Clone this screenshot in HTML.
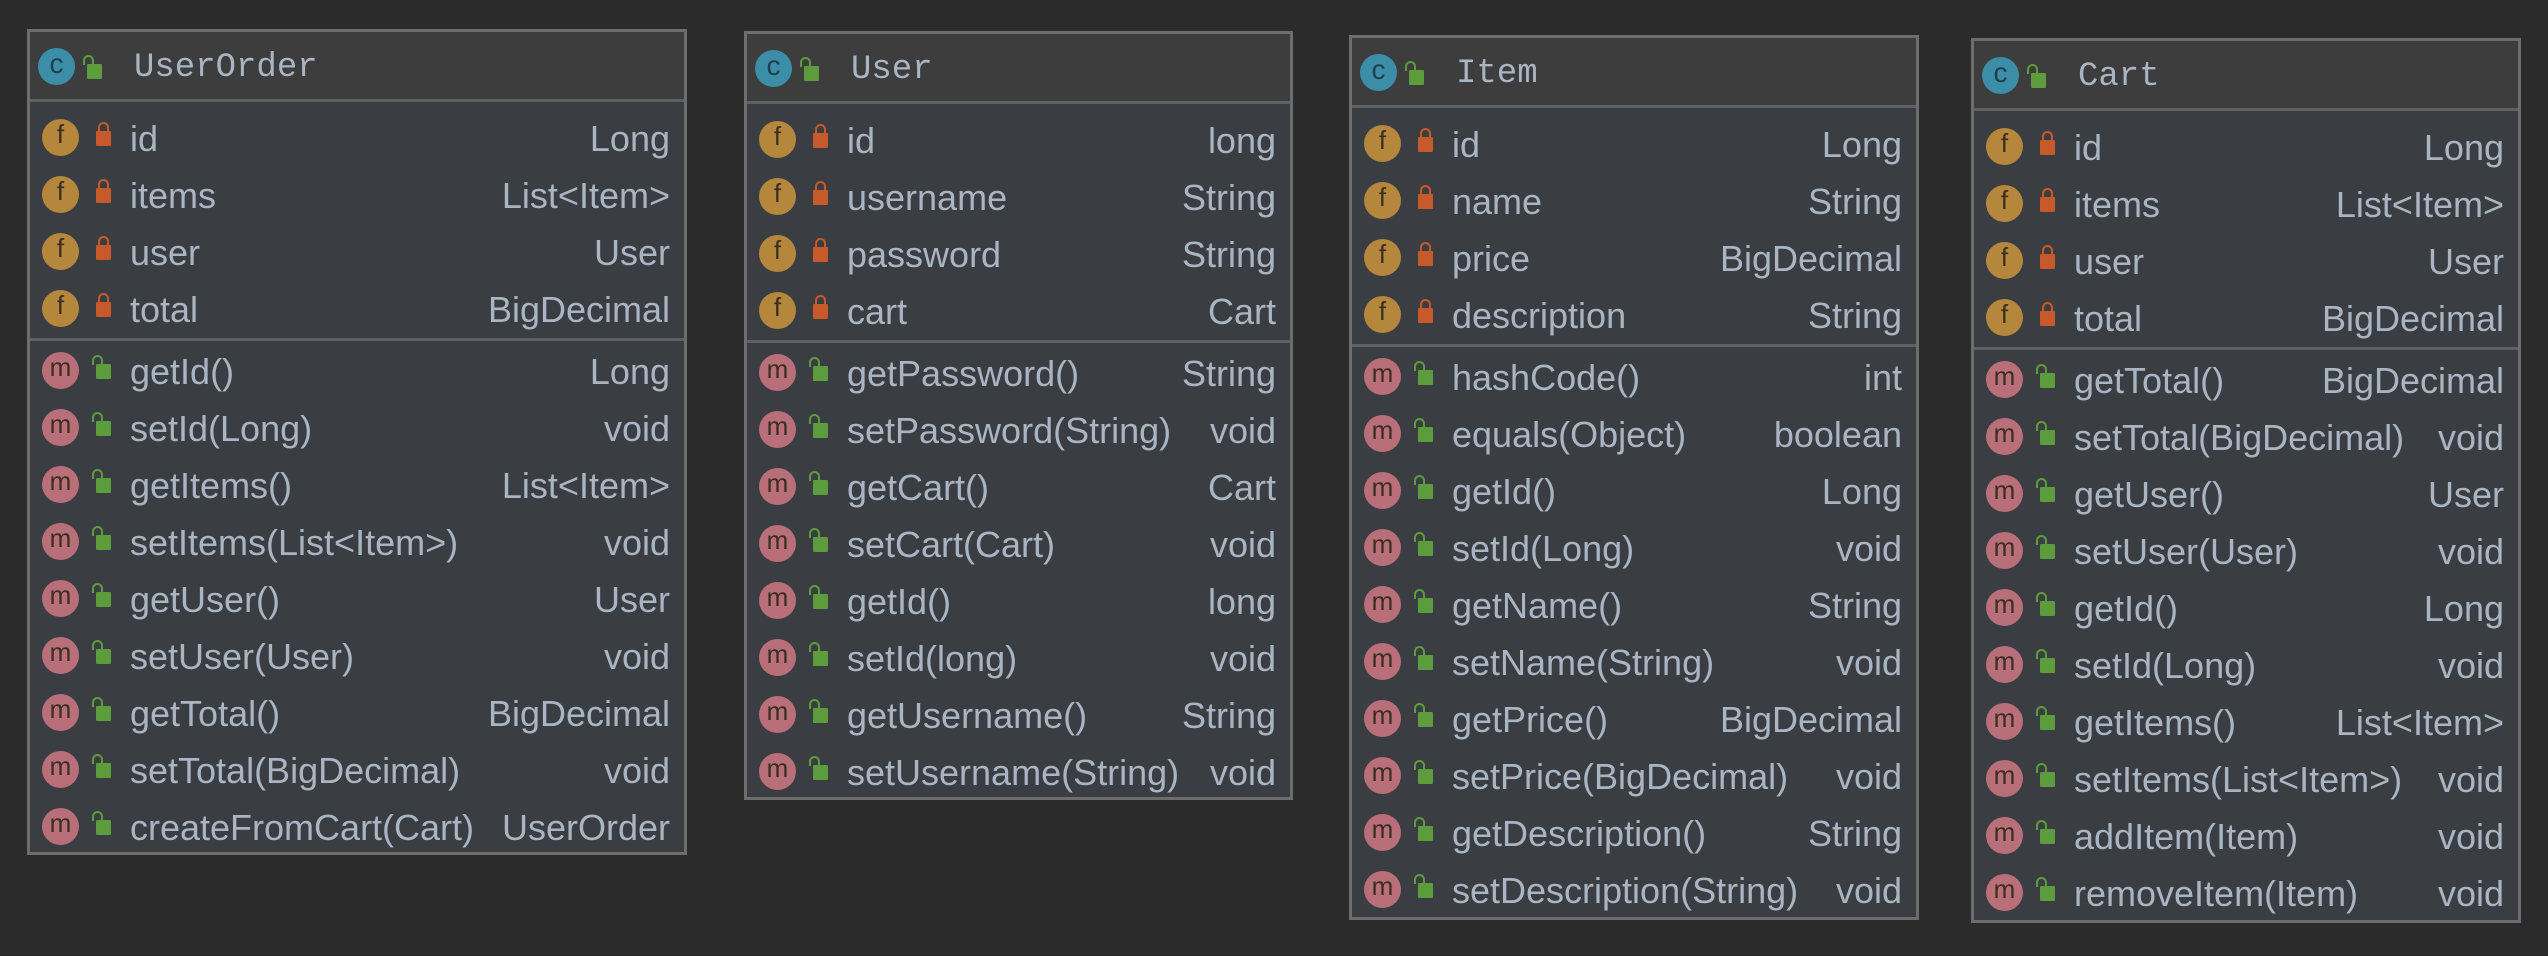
<!DOCTYPE html>
<html><head><meta charset="utf-8"><style>
html,body{margin:0;padding:0;background:#2b2b2b;width:2548px;height:956px;overflow:hidden}
.box{position:absolute;background:#3a3d41;border:3px solid #6d6d6d;box-sizing:border-box}
.hd{height:70px;background:#3d3d3d;border-bottom:3px solid #5e6164;position:relative;box-sizing:border-box}
.hd .t{position:absolute;left:104px;top:17px;font:34px "Liberation Mono",monospace;color:#aab5c4}
.sec{padding:0 0 3px}
.sec.f{border-bottom:3px solid #5e6164;padding-top:6px;padding-bottom:2px}
.r{height:57px;position:relative;font:36px "Liberation Sans",sans-serif;color:#aab5c4}
.r .n{position:absolute;left:100px;top:10px;white-space:nowrap}
.r .ty{position:absolute;right:14px;top:10px;white-space:nowrap}
.ic{position:absolute;width:37px;height:37px;border-radius:50%;top:11px;left:12px;text-align:center;line-height:35px;font:26px "Liberation Sans",sans-serif;color:#3a2e20}
.icf{background:#b5873d}
.icm{background:#b96f7a}
.icc{background:#3b8da8;left:8px;top:16px;color:#1f3f4c;font-size:28px}
.lk{position:absolute;left:66px;top:23px;width:15px;height:15px;background:#c65a2a;border-radius:1px}
.lk:before{content:"";position:absolute;left:2px;top:-9px;width:7px;height:8px;border:2px solid #c65a2a;border-bottom:none;border-radius:6px 6px 0 0}
.lk.g{background:#5c9c3d}
.lk.g:before{border-color:#5c9c3d;left:-4px;}
.hd .lk{left:57px;top:32px}
</style></head><body>

<div class="box" style="left:27px;top:29px;width:660px;height:826px">
<div class="hd"><div class="ic icc">c</div><div class="lk g"></div><div class="t">UserOrder</div></div>
<div class="sec f">
<div class="r"><div class="ic icf">f</div><div class="lk"></div><span class="n">id</span><span class="ty">Long</span></div>
<div class="r"><div class="ic icf">f</div><div class="lk"></div><span class="n">items</span><span class="ty">List&lt;Item&gt;</span></div>
<div class="r"><div class="ic icf">f</div><div class="lk"></div><span class="n">user</span><span class="ty">User</span></div>
<div class="r"><div class="ic icf">f</div><div class="lk"></div><span class="n">total</span><span class="ty">BigDecimal</span></div>
</div><div class="sec">
<div class="r"><div class="ic icm">m</div><div class="lk g"></div><span class="n">getId()</span><span class="ty">Long</span></div>
<div class="r"><div class="ic icm">m</div><div class="lk g"></div><span class="n">setId(Long)</span><span class="ty">void</span></div>
<div class="r"><div class="ic icm">m</div><div class="lk g"></div><span class="n">getItems()</span><span class="ty">List&lt;Item&gt;</span></div>
<div class="r"><div class="ic icm">m</div><div class="lk g"></div><span class="n">setItems(List&lt;Item&gt;)</span><span class="ty">void</span></div>
<div class="r"><div class="ic icm">m</div><div class="lk g"></div><span class="n">getUser()</span><span class="ty">User</span></div>
<div class="r"><div class="ic icm">m</div><div class="lk g"></div><span class="n">setUser(User)</span><span class="ty">void</span></div>
<div class="r"><div class="ic icm">m</div><div class="lk g"></div><span class="n">getTotal()</span><span class="ty">BigDecimal</span></div>
<div class="r"><div class="ic icm">m</div><div class="lk g"></div><span class="n">setTotal(BigDecimal)</span><span class="ty">void</span></div>
<div class="r"><div class="ic icm">m</div><div class="lk g"></div><span class="n">createFromCart(Cart)</span><span class="ty">UserOrder</span></div>
</div></div>

<div class="box" style="left:744px;top:31px;width:549px;height:769px">
<div class="hd"><div class="ic icc">c</div><div class="lk g"></div><div class="t">User</div></div>
<div class="sec f">
<div class="r"><div class="ic icf">f</div><div class="lk"></div><span class="n">id</span><span class="ty">long</span></div>
<div class="r"><div class="ic icf">f</div><div class="lk"></div><span class="n">username</span><span class="ty">String</span></div>
<div class="r"><div class="ic icf">f</div><div class="lk"></div><span class="n">password</span><span class="ty">String</span></div>
<div class="r"><div class="ic icf">f</div><div class="lk"></div><span class="n">cart</span><span class="ty">Cart</span></div>
</div><div class="sec">
<div class="r"><div class="ic icm">m</div><div class="lk g"></div><span class="n">getPassword()</span><span class="ty">String</span></div>
<div class="r"><div class="ic icm">m</div><div class="lk g"></div><span class="n">setPassword(String)</span><span class="ty">void</span></div>
<div class="r"><div class="ic icm">m</div><div class="lk g"></div><span class="n">getCart()</span><span class="ty">Cart</span></div>
<div class="r"><div class="ic icm">m</div><div class="lk g"></div><span class="n">setCart(Cart)</span><span class="ty">void</span></div>
<div class="r"><div class="ic icm">m</div><div class="lk g"></div><span class="n">getId()</span><span class="ty">long</span></div>
<div class="r"><div class="ic icm">m</div><div class="lk g"></div><span class="n">setId(long)</span><span class="ty">void</span></div>
<div class="r"><div class="ic icm">m</div><div class="lk g"></div><span class="n">getUsername()</span><span class="ty">String</span></div>
<div class="r"><div class="ic icm">m</div><div class="lk g"></div><span class="n">setUsername(String)</span><span class="ty">void</span></div>
</div></div>

<div class="box" style="left:1349px;top:35px;width:570px;height:885px">
<div class="hd"><div class="ic icc">c</div><div class="lk g"></div><div class="t">Item</div></div>
<div class="sec f">
<div class="r"><div class="ic icf">f</div><div class="lk"></div><span class="n">id</span><span class="ty">Long</span></div>
<div class="r"><div class="ic icf">f</div><div class="lk"></div><span class="n">name</span><span class="ty">String</span></div>
<div class="r"><div class="ic icf">f</div><div class="lk"></div><span class="n">price</span><span class="ty">BigDecimal</span></div>
<div class="r"><div class="ic icf">f</div><div class="lk"></div><span class="n">description</span><span class="ty">String</span></div>
</div><div class="sec">
<div class="r"><div class="ic icm">m</div><div class="lk g"></div><span class="n">hashCode()</span><span class="ty">int</span></div>
<div class="r"><div class="ic icm">m</div><div class="lk g"></div><span class="n">equals(Object)</span><span class="ty">boolean</span></div>
<div class="r"><div class="ic icm">m</div><div class="lk g"></div><span class="n">getId()</span><span class="ty">Long</span></div>
<div class="r"><div class="ic icm">m</div><div class="lk g"></div><span class="n">setId(Long)</span><span class="ty">void</span></div>
<div class="r"><div class="ic icm">m</div><div class="lk g"></div><span class="n">getName()</span><span class="ty">String</span></div>
<div class="r"><div class="ic icm">m</div><div class="lk g"></div><span class="n">setName(String)</span><span class="ty">void</span></div>
<div class="r"><div class="ic icm">m</div><div class="lk g"></div><span class="n">getPrice()</span><span class="ty">BigDecimal</span></div>
<div class="r"><div class="ic icm">m</div><div class="lk g"></div><span class="n">setPrice(BigDecimal)</span><span class="ty">void</span></div>
<div class="r"><div class="ic icm">m</div><div class="lk g"></div><span class="n">getDescription()</span><span class="ty">String</span></div>
<div class="r"><div class="ic icm">m</div><div class="lk g"></div><span class="n">setDescription(String)</span><span class="ty">void</span></div>
</div></div>

<div class="box" style="left:1971px;top:38px;width:550px;height:885px">
<div class="hd"><div class="ic icc">c</div><div class="lk g"></div><div class="t">Cart</div></div>
<div class="sec f">
<div class="r"><div class="ic icf">f</div><div class="lk"></div><span class="n">id</span><span class="ty">Long</span></div>
<div class="r"><div class="ic icf">f</div><div class="lk"></div><span class="n">items</span><span class="ty">List&lt;Item&gt;</span></div>
<div class="r"><div class="ic icf">f</div><div class="lk"></div><span class="n">user</span><span class="ty">User</span></div>
<div class="r"><div class="ic icf">f</div><div class="lk"></div><span class="n">total</span><span class="ty">BigDecimal</span></div>
</div><div class="sec">
<div class="r"><div class="ic icm">m</div><div class="lk g"></div><span class="n">getTotal()</span><span class="ty">BigDecimal</span></div>
<div class="r"><div class="ic icm">m</div><div class="lk g"></div><span class="n">setTotal(BigDecimal)</span><span class="ty">void</span></div>
<div class="r"><div class="ic icm">m</div><div class="lk g"></div><span class="n">getUser()</span><span class="ty">User</span></div>
<div class="r"><div class="ic icm">m</div><div class="lk g"></div><span class="n">setUser(User)</span><span class="ty">void</span></div>
<div class="r"><div class="ic icm">m</div><div class="lk g"></div><span class="n">getId()</span><span class="ty">Long</span></div>
<div class="r"><div class="ic icm">m</div><div class="lk g"></div><span class="n">setId(Long)</span><span class="ty">void</span></div>
<div class="r"><div class="ic icm">m</div><div class="lk g"></div><span class="n">getItems()</span><span class="ty">List&lt;Item&gt;</span></div>
<div class="r"><div class="ic icm">m</div><div class="lk g"></div><span class="n">setItems(List&lt;Item&gt;)</span><span class="ty">void</span></div>
<div class="r"><div class="ic icm">m</div><div class="lk g"></div><span class="n">addItem(Item)</span><span class="ty">void</span></div>
<div class="r"><div class="ic icm">m</div><div class="lk g"></div><span class="n">removeItem(Item)</span><span class="ty">void</span></div>
</div></div>

</body></html>
